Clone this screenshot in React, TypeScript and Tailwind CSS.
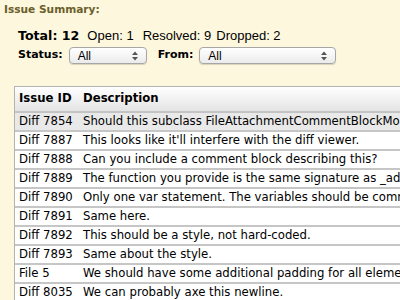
import React from 'react'

const issues = [
  { id: 'Diff 7854', desc: 'Should this subclass FileAttachmentCommentBlockModel instead?', active: true },
  { id: 'Diff 7887', desc: "This looks like it'll interfere with the diff viewer." },
  { id: 'Diff 7888', desc: 'Can you include a comment block describing this?' },
  { id: 'Diff 7889', desc: 'The function you provide is the same signature as _addComment.' },
  { id: 'Diff 7890', desc: 'Only one var statement. The variables should be comma-separated.' },
  { id: 'Diff 7891', desc: 'Same here.' },
  { id: 'Diff 7892', desc: 'This should be a style, not hard-coded.' },
  { id: 'Diff 7893', desc: 'Same about the style.' },
  { id: 'File 5', desc: 'We should have some additional padding for all elements.' },
  { id: 'Diff 8035', desc: 'We can probably axe this newline.' },
]

function Select({ width }: { width: string }) {
  return (
    <div
      className={`${width} h-[17px] flex items-center justify-between pl-2 pr-2 rounded-[4px] border border-[#a6a6a6] bg-gradient-to-b from-white to-[#ebebeb] shadow-[0_1px_1px_rgba(0,0,0,0.15)]`}
    >
      <span className="text-[12px] text-black font-['Liberation_Sans',Arial,sans-serif]">All</span>
      <svg width="6" height="10" viewBox="0 0 6 10">
        <path d="M0 4 L3 0.5 L6 4 Z" fill="#555" />
        <path d="M0 6 L3 9.5 L6 6 Z" fill="#555" />
      </svg>
    </div>
  )
}

export default function App() {
  return (
    <div className="w-[400px] h-[300px] overflow-hidden bg-[#fdf7de] font-['DejaVu_Sans',Verdana,sans-serif] text-black">
      <div className="pl-[4px] pt-[2px] text-[10.6px] font-bold text-[#6b5f2c] leading-[14px]">Issue Summary:</div>
      <div className="pl-[18px] pt-[12px] flex items-baseline text-[13px] leading-[16px] font-['Liberation_Sans',Arial,sans-serif]">
        <span className="font-bold text-[12.6px] font-['DejaVu_Sans',Verdana,sans-serif]">Total: 12</span>
        <span className="ml-[8px]">Open: 1</span>
        <span className="ml-[9px]">Resolved: 9</span>
        <span className="ml-[5px]">Dropped: 2</span>
      </div>
      <div className="pl-[18px] pt-[3px] flex items-center">
        <span className="text-[11px] font-bold mr-[6px]">Status:</span>
        <Select width="w-[78px]" />
        <span className="text-[11px] font-bold ml-[11px] mr-[6px]">From:</span>
        <Select width="w-[137px]" />
      </div>
      <div className="ml-[14px] mt-[22px] w-[480px] border-l border-t border-[#b3b3b3]">
        <div className="flex h-[26px] items-center bg-gradient-to-b from-white to-[#e4e4e4] border-b-2 border-[#c3c3c3] text-[11.7px] font-bold">
          <span className="w-[68px] pl-[4px]">Issue ID</span>
          <span>Description</span>
        </div>
        {issues.map((r) => (
          <div
            key={r.id}
            className={`flex h-[19px] items-center border-b-2 border-[#c6c6c6] text-[11.7px] whitespace-nowrap ${r.active ? 'bg-[#e9e9e9]' : 'bg-white'}`}
          >
            <span className="w-[68px] pl-[4px] shrink-0">{r.id}</span>
            <span>{r.desc}</span>
          </div>
        ))}
      </div>
    </div>
  )
}
